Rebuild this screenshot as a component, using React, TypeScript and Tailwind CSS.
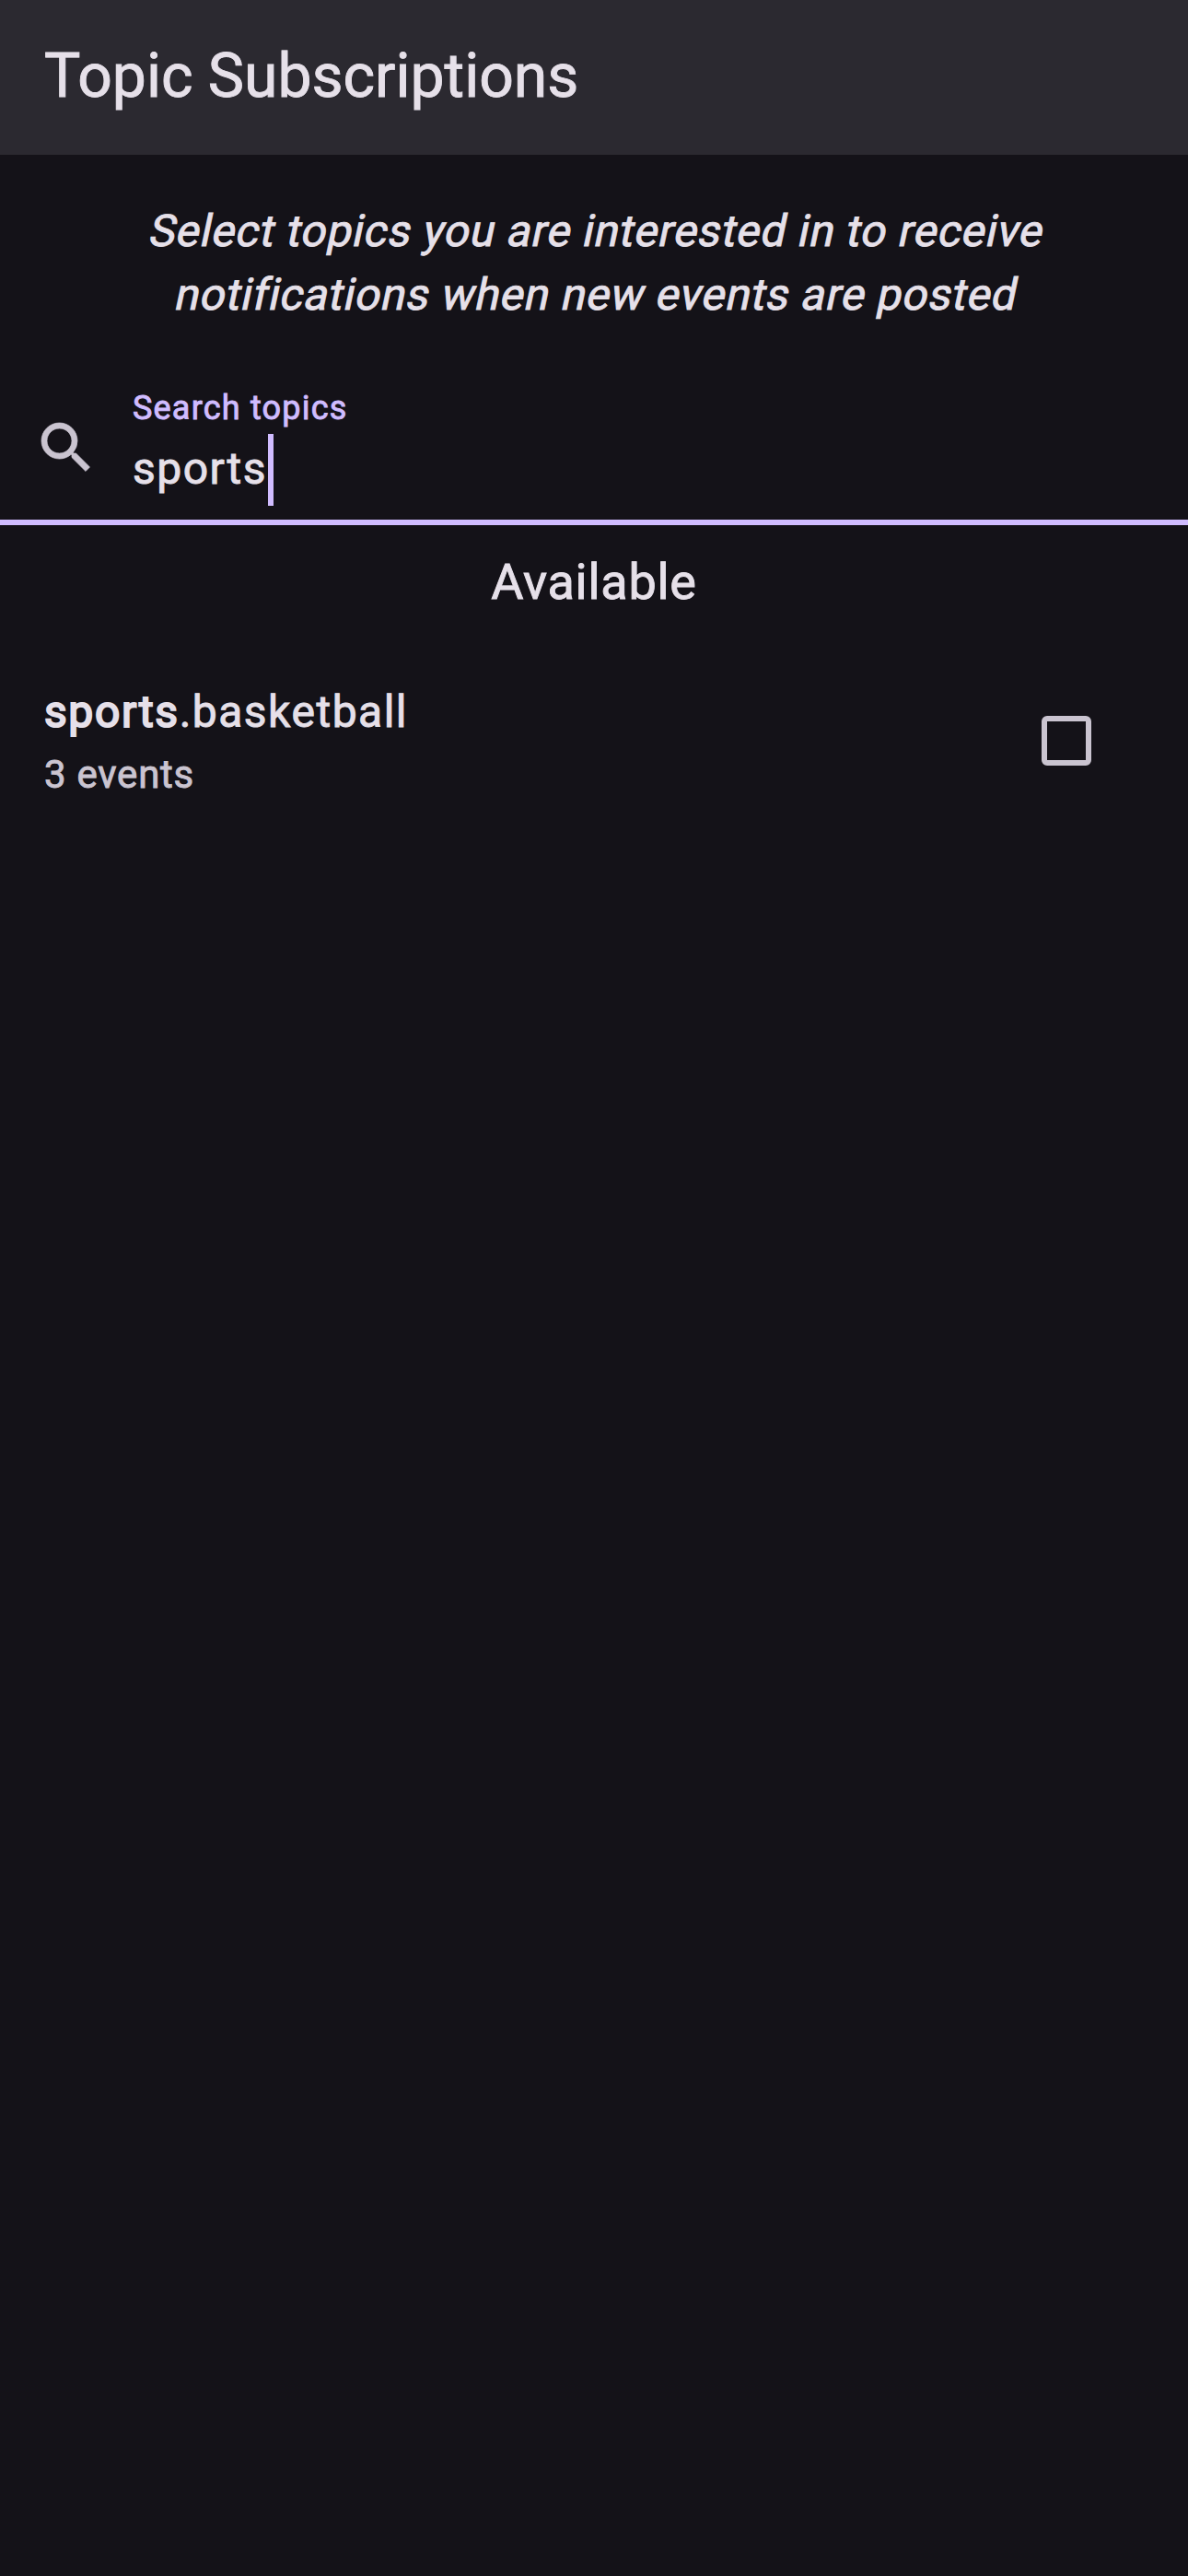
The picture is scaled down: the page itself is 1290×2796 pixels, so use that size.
import React from "react";

function SearchIcon() {
  return (
    <svg
      viewBox="0 0 24 24"
      className="h-[72px] w-[72px] fill-[#cac4d0] stroke-[#cac4d0] [stroke-width:0.25]"
    >
      <path d="M15.5 14h-.79l-.28-.27A6.471 6.471 0 0 0 16 9.5 6.5 6.5 0 1 0 9.5 16c1.61 0 3.09-.59 4.23-1.57l.27.28v.79l5 4.99L20.49 19l-4.99-5zm-6 0C7.01 14 5 11.99 5 9.5S7.01 5 9.5 5 14 7.01 14 9.5 11.99 14 9.5 14z" />
    </svg>
  );
}

// Upright Roboto slanted around its baseline.
function ObliqueLine({ children }: { children: React.ReactNode }) {
  return <span className="origin-[0_51px] -skew-x-12 whitespace-nowrap">{children}</span>;
}

function SearchField() {
  return (
    <div className="mt-[48px] flex h-[168px] border-b-[6px] border-[#d0bcff]">
      <div className="flex w-[144px] justify-center pt-[48px]">
        <SearchIcon />
      </div>
      <div className="flex flex-col gap-1 pt-[17px]">
        <label className="text-[36px] leading-[48px] tracking-[1.2px] text-[#d0bcff]">
          Search topics
        </label>
        <div className="flex items-start gap-px">
          <span className="text-[48px] leading-[75px] tracking-[1.5px]">sports</span>
          <span className="h-[78px] w-[6px] bg-[#d0bcff]" />
        </div>
      </div>
    </div>
  );
}

function TopicRow() {
  return (
    <div className="mt-[61px] flex items-start justify-between px-12 pt-1">
      <div className="flex flex-col gap-px">
        <div className="text-[48px] leading-[73px] tracking-[1.5px]">
          <span className="tracking-[1.6px] [-webkit-text-stroke:2px_currentColor]">sports</span>.basketball
        </div>
        <div className="text-[42px] leading-[61px] tracking-[0.75px] text-[#cac4d0]">3 events</div>
      </div>
      <div className="mt-[41px] mr-[57px] h-[54px] w-[54px] rounded-[6px] border-[6px] border-[#cac4d0]" />
    </div>
  );
}

export default function App() {
  return (
    <div className="flex h-[2796px] w-[1290px] flex-col bg-[#141218] font-['Roboto',sans-serif] text-[#e6e0e9] [-webkit-text-stroke:0.9px_currentColor]">
      <header className="h-[168px] bg-[#2b2930] px-12 pt-[41px]">
        <h1 className="text-[66px] leading-[84px]">Topic Subscriptions</h1>
      </header>
      <p className="mt-[48px] flex flex-col items-center text-[48px] leading-[69px] tracking-[0.75px]">
        <ObliqueLine>Select topics you are interested in to receive</ObliqueLine>
        <ObliqueLine>notifications when new events are posted</ObliqueLine>
      </p>
      <SearchField />
      <h2 className="mt-[22px] text-center text-[54px] leading-[79px] tracking-[0.75px]">Available</h2>
      <TopicRow />
    </div>
  );
}
